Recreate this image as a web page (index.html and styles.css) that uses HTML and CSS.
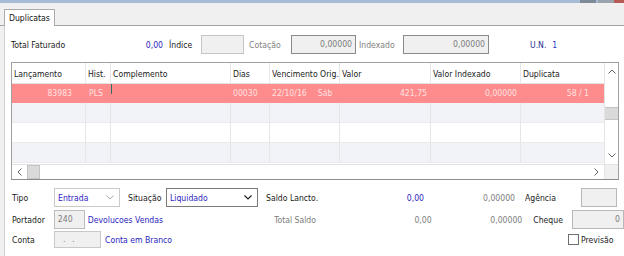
FILE: index.html
```html
<!DOCTYPE html>
<html>
<head>
<meta charset="utf-8">
<link rel="stylesheet" href="styles.css">
</head>
<body>
<div class="topstrip"><span class="ts-fill"></span><span class="ts-a"></span><span class="ts-b"></span><span class="ts-c"></span></div>
<div class="tabstrip"><div class="tab">Duplicatas</div></div>
<div class="panel">
  <div class="row1">
    <span class="tf-label">Total Faturado</span>
    <span class="tf-value blue">0,00</span>
    <span class="lbl l-indice">Índice</span>
    <span class="box b-indice"></span>
    <span class="lbl l-cot">Cotação</span>
    <span class="box dark b-cot">0,00000</span>
    <span class="lbl l-idx">Indexado</span>
    <span class="box dark b-idx">0,00000</span>
    <span class="un">U.N.</span><span class="un-v">1</span>
  </div>

  <div class="grid">
    <div class="gmain">
      <div class="grow head">
        <div class="c c1">Lançamento</div><div class="c c2">Hist.</div><div class="c c3">Complemento</div><div class="c c4">Dias</div><div class="c c5">Vencimento Orig.</div><div class="c c6">Valor</div><div class="c c7">Valor Indexado</div><div class="c c8">Duplicata</div>
      </div>
      <div class="grow sel">
        <div class="c c1 r pr13">83983</div><div class="c c2 pl3">PLS</div><div class="c c3"><span class="caret"></span></div><div class="c c4">00030</div><div class="c c5">22/10/16<span class="dow">Sáb</span></div><div class="c c6 r">421,75</div><div class="c c7 r">0,00000</div><div class="c c8 r pr15">58 / 1</div>
      </div>
      <div class="grow alt"><div class="c c1"></div><div class="c c2"></div><div class="c c3"></div><div class="c c4"></div><div class="c c5"></div><div class="c c6"></div><div class="c c7"></div><div class="c c8"></div></div>
      <div class="grow"><div class="c c1"></div><div class="c c2"></div><div class="c c3"></div><div class="c c4"></div><div class="c c5"></div><div class="c c6"></div><div class="c c7"></div><div class="c c8"></div></div>
      <div class="grow alt"><div class="c c1"></div><div class="c c2"></div><div class="c c3"></div><div class="c c4"></div><div class="c c5"></div><div class="c c6"></div><div class="c c7"></div><div class="c c8"></div></div>
    </div>
    <div class="vscroll">
      <div class="arr-up"><svg width="8" height="5" viewBox="0 0 8 5"><polyline points="0.5,4.5 4,1 7.5,4.5" fill="none" stroke="#606060" stroke-width="1"/></svg></div>
      <div class="vtrack"><div class="vthumb"></div></div>
      <div class="arr-dn"><svg width="8" height="5" viewBox="0 0 8 5"><polyline points="0.5,0.5 4,4 7.5,0.5" fill="none" stroke="#606060" stroke-width="1"/></svg></div>
    </div>
    <div class="hscroll">
      <div class="arr-l"><svg width="5" height="8" viewBox="0 0 5 8"><polyline points="4.5,0.5 1,4 4.5,7.5" fill="none" stroke="#606060" stroke-width="1"/></svg></div>
      <div class="hthumb"></div>
      <div class="htrack"></div>
      <div class="arr-r"><svg width="5" height="8" viewBox="0 0 5 8"><polyline points="0.5,0.5 4,4 0.5,7.5" fill="none" stroke="#606060" stroke-width="1"/></svg></div>
    </div>
    <div class="corner"></div>
  </div>

  <div class="bottom">
    <div class="brow ra">
      <span class="blbl">Tipo</span>
      <span class="combo c-tipo"><span class="blue">Entrada</span><svg width="8" height="5" viewBox="0 0 8 5"><polyline points="0.5,0.5 4,4 7.5,0.5" fill="none" stroke="#a8a8a8" stroke-width="1"/></svg></span>
      <span class="lbl l-sit">Situação</span>
      <span class="combo c-sit"><span class="blue">Liquidado</span><svg width="8" height="5" viewBox="0 0 8 5"><polyline points="0.5,0.5 4,4 7.5,0.5" fill="none" stroke="#202020" stroke-width="1.2"/></svg></span>
      <span class="slbl">Saldo Lancto.</span>
      <span class="v1 blue">0,00</span>
      <span class="v2 gray">0,00000</span>
      <span class="lbl l-ag">Agência</span>
      <span class="box b-ag"></span>
    </div>
    <div class="brow rb">
      <span class="blbl">Portador</span>
      <span class="box b-port gray">240</span>
      <span class="desc blue">Devolucoes Vendas</span>
      <span class="slbl gray">Total Saldo</span>
      <span class="v1 gray">0,00</span>
      <span class="v2 gray">0,00000</span>
      <span class="lbl l-ch">Cheque</span>
      <span class="box b-ch gray">0</span>
    </div>
    <div class="brow rc">
      <span class="blbl">Conta</span>
      <span class="box b-conta gray">. .</span>
      <span class="desc2 blue">Conta em Branco</span>
      <span class="chk"></span><span class="chk-l">Previsão</span>
    </div>
  </div>
</div>
</body>
</html>
```

FILE: styles.css
```css
* { box-sizing: border-box; }
html, body {
  margin: 0;
  padding: 0;
}
body {
  width: 624px;
  height: 256px;
  overflow: hidden;
  background: #f0f0f0;
  font-family: "DejaVu Sans Condensed", "Liberation Sans", sans-serif;
  font-size: 8.6px;
  color: #1a1a1a;
}
.blue { color: #2b24c0; }
.gray { color: #7c7c7c; }

.topstrip {
  height: 3px;
  display: flex;
}
.ts-fill { flex: 1; background: #a7bcd7; }
.ts-a { width: 16px; background: #7f8a97; }
.ts-b { width: 2px; background: #a7bcd7; }
.ts-c { width: 16px; background: #9aa3ae; }
.topstrip::after { content: ""; width: 10px; background: #b85a56; }

.tabstrip {
  height: 23px;
  padding-left: 4px;
  display: flex;
  align-items: flex-end;
  border-bottom: 1px solid #a3a3a3;
}
.tab {
  width: 51px;
  height: 17px;
  margin-bottom: -1px;
  position: relative;
  background: #fff;
  border: 1px solid #acacac;
  border-bottom: none;
  padding: 3px 0 0 4px;
  color: #111;
}

.panel {
  margin-left: 4px;
  height: 230px;
  background: #fff;
  border-left: 1px solid #d2d2d2;
  padding-left: 6px;
}

.row1 {
  padding-top: 9px;
  height: 28px;
  display: flex;
  align-items: center;
}
.row1 > span { display: block; }
.tf-label { width: 110px; }
.tf-value { width: 42px; text-align: right; }
.lbl { color: #1a1a1a; }
.l-indice { margin-left: 6px; width: 32px; }
.box {
  height: 19px;
  background: #f0f0f0;
  border: 1px solid #c6c6c6;
  text-align: right;
  padding: 3px 3px 0 0;
  color: #7c7c7c;
}
.box.dark { border-color: #8a8a8a; }
.b-indice { width: 43px; }
.l-cot { margin-left: 5px; width: 42px; color: #808080; }
.b-cot { width: 65px; }
.l-idx { margin-left: 3px; width: 44px; color: #808080; }
.b-idx { width: 86px; }
.un { margin-left: 41px; color: #24308c; }
.un-v { margin-left: 6px; color: #2a3ac8; }

.grid {
  margin-top: 8px;
  width: 608px;
  height: 118px;
  border: 1px solid #a0a0a0;
  border-bottom-color: #8c8c8c;
  display: grid;
  grid-template-columns: 592px 14px;
  grid-template-rows: 101px 15px;
}
.gmain { overflow: hidden; }
.grow { display: flex; height: 20px; background: #fff; }
.grow.head { height: 21px; border-bottom: 1px solid #e2e2e2; }
.grow.alt { background: #f2f3f9; }
.grow.sel { height: 19px; background: #ff8c8c; color: #ffe2e2; }
.c {
  height: 100%;
  border-right: 1px solid #e6e6e6;
  border-bottom: 1px solid #ebebeb;
  padding: 5px 0 0 2px;
  white-space: nowrap;
  overflow: hidden;
}
.head .c { border-bottom: none; padding-top: 6px; color: #1a1a1a; }
.sel .c { border-color: #ff8c8c; padding-top: 4px; position: relative; }
.c1 { width: 74px; }
.c2 { width: 25px; }
.c3 { width: 120px; }
.c4 { width: 39px; }
.c5 { width: 70px; }
.c6 { width: 91px; }
.c7 { width: 90px; }
.c8 { width: 83px; border-right: none; }
.r { text-align: right; padding-right: 3px; padding-left: 0; }
.pr13 { padding-right: 13px; }
.pr15 { padding-right: 15px; }
.pl3 { padding-left: 3px; }
.dow { margin-left: 11px; }
.caret {
  position: absolute;
  left: 0;
  top: 0;
  width: 1px;
  height: 10px;
  background: #2e6f66;
}

.vscroll {
  display: flex;
  flex-direction: column;
  background: #fff;
  border-left: 1px solid #e4e4e4;
}
.arr-up, .arr-dn {
  height: 17px;
  display: flex;
  align-items: center;
  justify-content: center;
}
.vtrack { flex: 1; padding-top: 27px; }
.vthumb { height: 13px; background: #dadada; border: 1px solid #c4c4c4; border-left: none; border-right: none; }

.hscroll {
  display: flex;
  background: #fff;
  border-top: 1px solid #e2e2e2;
}
.arr-l, .arr-r {
  width: 15px;
  display: flex;
  align-items: center;
  justify-content: center;
}
.hthumb { width: 13px; background: #dadada; border: 1px solid #c4c4c4; }
.htrack { flex: 1; }
.corner { background: #f0f0f0; border-left: 1px solid #e4e4e4; border-top: 1px solid #e2e2e2; }

.bottom { padding-top: 8px; }
.brow { display: flex; align-items: center; }
.brow > span { display: block; }
.ra { height: 19px; }
.rb { height: 19px; margin-top: 3px; }
.rc { height: 17px; margin-top: 2px; }
.blbl { width: 43px; padding-left: 1px; }
.combo {
  height: 19px;
  display: flex !important;
  align-items: center;
  justify-content: space-between;
  padding: 0 5px 0 3px;
  background: #fff;
  border: 1px solid #cacaca;
}
.c-tipo { width: 66px; }
.c-sit { width: 92px; border-color: #7a7a7a; margin-left: 3px; }
.l-sit { margin-left: 8px; width: 35px; }
.slbl { margin-left: 8px; width: 100px; }
.v1 { width: 58px; text-align: right; }
.v2 { width: 91px; text-align: right; color: #7c7c7c; }
.l-ag { margin-left: 10px; width: 56px; }
.b-ag { width: 36px; border-color: #b8b8b8; }
.b-port { width: 31px; text-align: left; padding-left: 3px; border-color: #bdbdbd; }
.desc { margin-left: 3px; width: 179px; }
.l-ch { margin-left: 11px; width: 39px; }
.b-ch { width: 52px; border-color: #b8b8b8; }
.b-conta { width: 47px; height: 17px; text-align: left; padding: 2px 0 0 8px; letter-spacing: 2px; border-color: #c8c8c8; }
.desc2 { margin-left: 4px; width: 463px; }
.chk { width: 11px; height: 11px; border: 1px solid #6e6e6e; background: #fff; }
.chk-l { margin-left: 2px; }
```
